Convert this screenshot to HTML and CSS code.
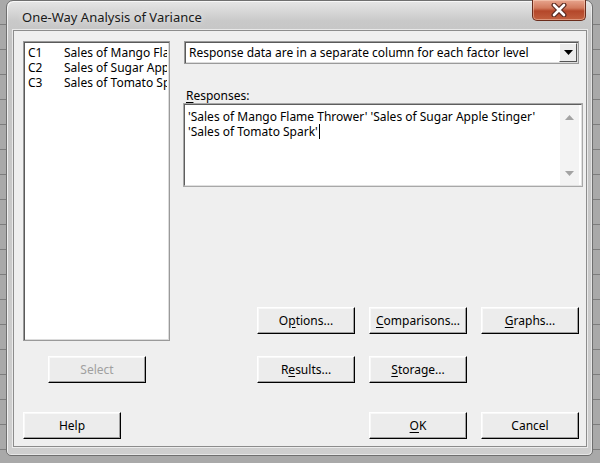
FILE: index.html
```html
<!DOCTYPE html>
<html>
  <head>
    <title>One-Way Analysis of Variance</title>
    <link rel="stylesheet" href="styles.css">
  </head>
  <body>
    <div class="desktop">
      <div class="window">
        <div class="titlebar">
          <span class="title">One-Way Analysis of Variance</span>
          <div class="close">
            <svg width="18" height="14" viewBox="0 0 18 14">
              <path d="M4 2 L14 12 M14 2 L4 12" stroke="#5a2a20" stroke-width="5" stroke-linecap="round"/>
              <path d="M4 2 L14 12 M14 2 L4 12" stroke="#fff" stroke-width="2.6" stroke-linecap="round"/>
            </svg>
          </div>
        </div>

        <div class="client">
          <div class="main">
            <div class="left">
              <div class="listbox">
                <div class="item"><span class="colid">C1</span><span class="colname">Sales of Mango Flame Thrower</span></div>
                <div class="item"><span class="colid">C2</span><span class="colname">Sales of Sugar Apple Stinger</span></div>
                <div class="item"><span class="colid">C3</span><span class="colname">Sales of Tomato Spark</span></div>
              </div>
              <div class="btn disabled select-btn">Select</div>
            </div>

            <div class="right">
              <div class="combo">
                <span class="combo-text">Response data are in a separate column for each factor level</span>
                <span class="combo-btn">
                  <svg width="9" height="5" viewBox="0 0 9 5"><path d="M0 0 H9 L4.5 5 Z" fill="#000"/></svg>
                </span>
              </div>

              <div class="field-label"><u>R</u>esponses:</div>
              <div class="memo">
                <div class="memo-text">'Sales of Mango Flame Thrower' 'Sales of Sugar Apple Stinger'<br>'Sales of Tomato Spark'<span class="caret"></span></div>
                <div class="vscroll">
                  <svg width="9" height="5" viewBox="0 0 9 5"><path d="M0 5 H9 L4.5 0 Z" fill="#a3a3a3"/></svg>
                  <svg width="9" height="5" viewBox="0 0 9 5"><path d="M0 0 H9 L4.5 5 Z" fill="#a3a3a3"/></svg>
                </div>
              </div>

              <div class="btn-grid">
                <div class="btn">O<u>p</u>tions...</div>
                <div class="btn"><u>C</u>omparisons...</div>
                <div class="btn"><u>G</u>raphs...</div>
                <div class="btn">R<u>e</u>sults...</div>
                <div class="btn"><u>S</u>torage...</div>
              </div>
            </div>
          </div>

          <div class="footer">
            <div class="btn">Help</div>
            <div class="footer-right">
              <div class="btn"><u>O</u>K</div>
              <div class="btn">Cancel</div>
            </div>
          </div>
        </div>
      </div>
    </div>
  </body>
</html>
```

FILE: styles.css
```css
* {box-sizing: border-box;}

body {
  margin: 0;
  font-family: "Noto Sans", "Open Sans", sans-serif;
  font-size: 12px;
  color: #000;
}

.desktop {
  width: 600px;
  height: 463px;
  overflow: hidden;
  background-color: #a9a9a9;
  background-image: repeating-linear-gradient(to bottom, transparent 0, transparent 24px, #7d7d7d 24px, #7d7d7d 25px);
}

.window {
  margin-left: 6px;
  width: 587px;
  height: 456px;
  display: flex;
  flex-direction: column;
  padding: 0 5px 8px 6px;
  border: 1px solid #6f6f6f;
  border-radius: 7px 7px 5px 5px;
  background: linear-gradient(to bottom, #e6e6e6 0, #c9c9c9 20px, #c4c4c4 40px, #cfcfcf 100%);
  box-shadow: inset 1px 1px 0 rgba(255,255,255,0.7), inset -1px -1px 0 rgba(255,255,255,0.5);
}

.titlebar {
  height: 30px;
  display: flex;
  align-items: flex-start;
}

.title {
  flex: 1;
  padding: 7px 0 0 9px;
  font-size: 13px;
  color: #1a1a1a;
  text-shadow: 0 0 6px rgba(255,255,255,0.9);
}

.close {
  width: 54px;
  height: 21px;
  margin: -1px 1px 0 0;
  display: flex;
  align-items: center;
  justify-content: center;
  border: 1px solid #6a2c1c;
  border-top: none;
  border-radius: 0 0 5px 5px;
  background: linear-gradient(to bottom, #e7a58e 0, #d27a5d 40%, #b4472a 55%, #c2603f 100%);
  box-shadow: inset 0 0 0 1px rgba(255,220,200,0.45);
}

.client {
  flex: 1;
  display: flex;
  flex-direction: column;
  padding: 10px 7px 7px 9px;
  background: #efefef;
  border: 1px solid #8c8c8c;
  box-shadow: 0 0 0 1px rgba(255,255,255,0.6);
}

.main {
  display: grid;
  grid-template-columns: 147px 1fr;
  column-gap: 14px;
}

.left {
  display: flex;
  flex-direction: column;
}

.listbox {
  height: 300px;
  padding: 3px 2px;
  background: #fff;
  border: 1px solid #9a9a9a;
  box-shadow: inset 1px 1px 0 #5a5a5a, inset -1px -1px 0 #dcdcdc;
  overflow: hidden;
}

.item {
  display: flex;
  height: 15px;
  line-height: 15px;
  padding-left: 2px;
  white-space: nowrap;
}

.colid {
  width: 36px;
  flex: none;
}

.colname {
  flex: 1;
  min-width: 0;
  overflow: hidden;
}

.btn {
  width: 98px;
  height: 27px;
  display: flex;
  align-items: center;
  justify-content: center;
  background: #ececec;
  border: 1px solid;
  border-color: #fff #000 #000 #fff;
  box-shadow: inset -1px -1px 0 #a0a0a0, inset 1px 1px 0 #f8f8f8;
  white-space: nowrap;
}

.btn u {
  text-underline-offset: 2px;
}

.btn.disabled {
  color: #a0a0a0;
}

.select-btn {
  margin: 15px 0 0 25px;
}

.right {
  display: flex;
  flex-direction: column;
}

.combo {
  height: 23px;
  display: flex;
  align-items: center;
  padding: 0 1px 0 4px;
  background: #fff;
  border: 1px solid #9a9a9a;
  box-shadow: inset 1px 1px 0 #5a5a5a, inset -1px -1px 0 #dcdcdc;
}

.combo-text {
  flex: 1;
  white-space: nowrap;
  overflow: hidden;
}

.combo-btn {
  width: 18px;
  height: 19px;
  display: flex;
  align-items: center;
  justify-content: center;
  background: #ececec;
  border: 1px solid;
  border-color: #fff #555 #555 #fff;
}

.field-label {
  margin-top: 24px;
  height: 15px;
  line-height: 15px;
  padding-left: 2px;
}

.field-label u {
  text-underline-offset: 2px;
}

.memo {
  height: 84px;
  margin: 0 -4px 0 -1px;
  display: flex;
  background: #fff;
  border: 2px solid;
  border-color: #5e5e5e #e0e0e0 #e0e0e0 #5e5e5e;
  outline: 1px solid #a8a8a8;
  outline-offset: -1px;
}

.memo-text {
  flex: 1;
  padding: 4px 3px;
  line-height: 15px;
  white-space: nowrap;
}

.caret {
  display: inline-block;
  width: 1px;
  height: 15px;
  margin-left: 1px;
  vertical-align: top;
  background: #000;
}

.vscroll {
  width: 19px;
  margin-right: 2px;
  display: flex;
  flex-direction: column;
  align-items: center;
  justify-content: space-between;
  padding: 10px 0 9px;
  background: #f3f3f3;
}

.btn-grid {
  margin-top: auto;
  display: grid;
  grid-template-columns: repeat(3, 98px);
  gap: 22px 14px;
  justify-content: end;
}

.footer {
  margin-top: 29px;
  display: flex;
  justify-content: space-between;
}

.footer-right {
  display: flex;
  gap: 14px;
}
```
